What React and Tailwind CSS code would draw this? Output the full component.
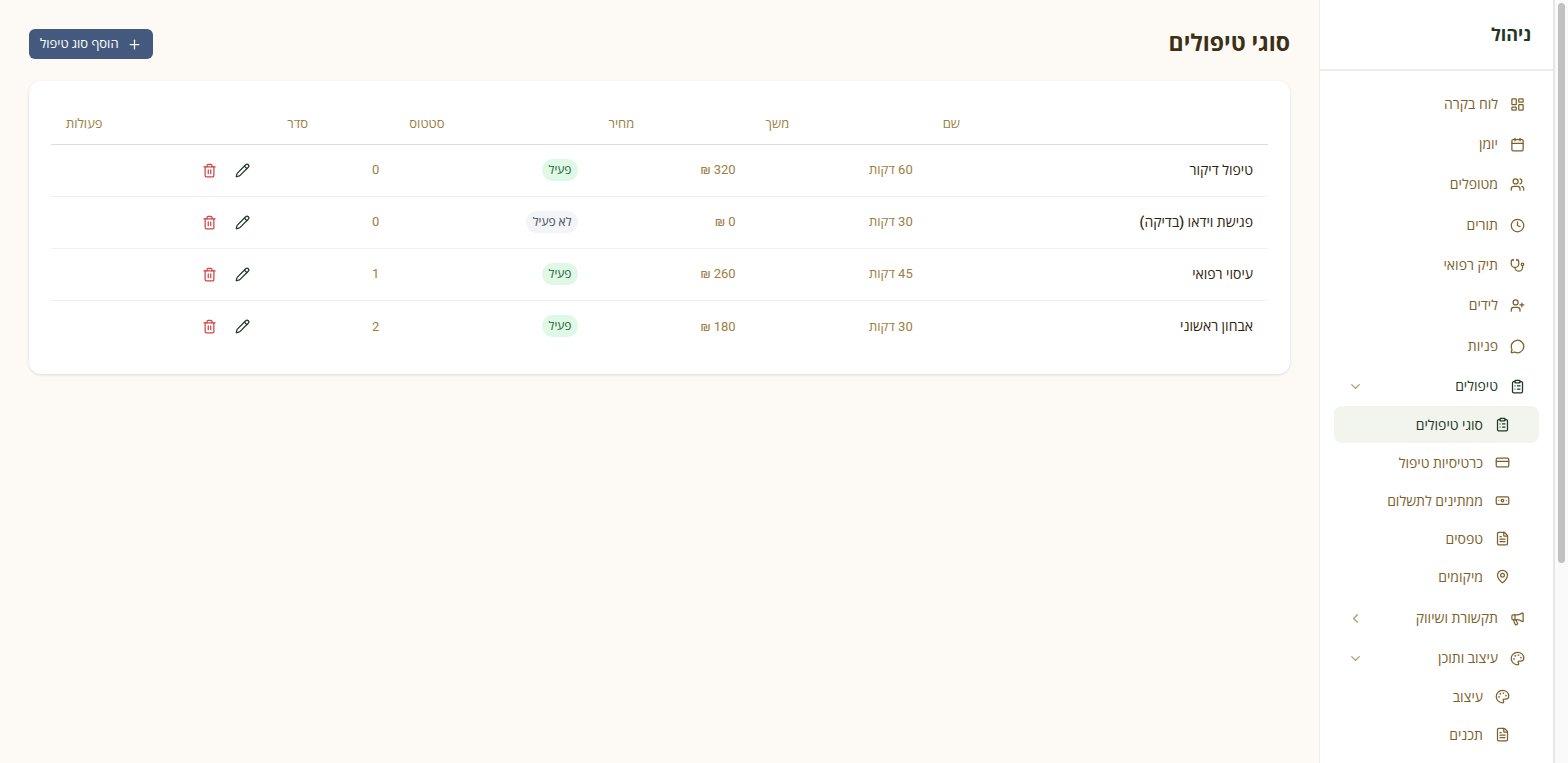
import { useState } from "react"
import {
    Banknote, Calendar, ChevronDown, ChevronLeft, ClipboardList, Clock, CreditCard, FileText,
    LayoutDashboard, MapPin, Megaphone, MessageCircle, Palette, Pencil, Plus, Stethoscope,
    Trash2, UserPlus, Users
} from "lucide-react"

const navGroups = [
    [
        { label: "לוח בקרה", icon: LayoutDashboard },
        { label: "יומן", icon: Calendar },
        { label: "מטופלים", icon: Users },
    ],
    [
        { label: "תורים", icon: Clock },
        { label: "תיק רפואי", icon: Stethoscope },
        { label: "לידים", icon: UserPlus },
    ],
    [
        { label: "פניות", icon: MessageCircle },
        {
            label: "טיפולים", icon: ClipboardList, active: true, items: [
                { label: "סוגי טיפולים", icon: ClipboardList, active: true },
                { label: "כרטיסיות טיפול", icon: CreditCard },
                { label: "ממתינים לתשלום", icon: Banknote },
                { label: "טפסים", icon: FileText },
                { label: "מיקומים", icon: MapPin },
            ]
        },
    ],
    [
        { label: "תקשורת ושיווק", icon: Megaphone, items: [] },
        {
            label: "עיצוב ותוכן", icon: Palette, items: [
                { label: "עיצוב", icon: Palette },
                { label: "תכנים", icon: FileText },
            ]
        },
    ],
]

const treatments = [
    { name: "טיפול דיקור", minutes: 60, price: 320, active: true, order: 0 },
    { name: "פגישת וידאו (בדיקה)", minutes: 30, price: 0, active: false, order: 0 },
    { name: "עיסוי רפואי", minutes: 45, price: 260, active: true, order: 1 },
    { name: "אבחון ראשוני", minutes: 30, price: 180, active: true, order: 2 },
]

const columns = [
    { label: "שם", width: "w-[340px]" },
    { label: "משך", width: "w-[177px]" },
    { label: "מחיר", width: "w-[157px]" },
    { label: "סטטוס", width: "w-[199px]" },
    { label: "סדר", width: "w-[122px]" },
    { label: "פעולות", width: "w-[221px]" },
]

const NavGroup = ({ item }) => {
    const [open, setOpen] = useState(item.items.length > 0)
    const Icon = item.icon
    const Chevron = open ? ChevronDown : ChevronLeft

    return (
        <li>
            <button
                onClick={() => setOpen(!open)}
                aria-expanded={open}
                className={`flex h-9 w-full items-center gap-3 rounded-lg px-[14px] ${item.active ? "text-[#1e3824]" : "text-[#7d5f2c]"}`}>
                <Icon size={15} />
                <span>{item.label}</span>
                <Chevron size={15} className="ms-auto text-[#b09a6c]" />
            </button>
            {open && item.items.length > 0 &&
                <ul className="mt-[2px] flex flex-col gap-px">
                    {item.items.map((sub) => <NavLink key={sub.label} item={sub} nested />)}
                </ul>
            }
        </li>
    )
}

const NavLink = ({ item, nested }) => {
    const Icon = item.icon
    return (
        <li>
            <a
                href="#"
                className={`flex items-center gap-3 rounded-lg ${nested ? "h-[37px] pe-[14px] ps-[29px]" : "h-9 px-[14px]"} ${item.active ? "bg-[#f1f5ee] text-[#1e3824]" : "text-[#7d5f2c]"}`}>
                <Icon size={15} />
                <span>{item.label}</span>
            </a>
        </li>
    )
}

const Sidebar = () => (
    <aside className="flex w-[234px] shrink-0 flex-col border-e border-[#efede8] bg-white">
        <div className="flex h-[71px] shrink-0 items-center border-b-2 border-[#ececea] px-[22px]">
            <h2 className="text-lg font-bold text-[#1e3824]">ניהול</h2>
        </div>
        <nav className="flex flex-col gap-[5px] px-[14px] py-[15px] text-sm">
            {navGroups.map((group, index) =>
                <ul key={index} className="flex flex-col gap-1">
                    {group.map((item) => item.items
                        ? <NavGroup key={item.label} item={item} />
                        : <NavLink key={item.label} item={item} />
                    )}
                </ul>
            )}
        </nav>
    </aside>
)

const StatusBadge = ({ active }) => (
    <span className={`inline-block rounded-full px-[7px] py-[3px] text-xs leading-4 ${active ? "bg-[#e0f9e7] text-[#246038]" : "bg-[#f3f4f7] text-[#434b58]"}`}>
        {active ? "פעיל" : "לא פעיל"}
    </span>
)

export default function App() {
    return (
        <div dir="rtl" className="flex h-screen overflow-hidden bg-[#fdfaf5] font-['Roboto','Open_Sans','Liberation_Sans',sans-serif]">
            <div className="w-[15px] shrink-0 border-e-2 border-[#e6e6e6] bg-[#fafafa] px-[3px] py-[3px]">
                <div className="h-[74%] w-[7px] rounded-full bg-[#c1c1c1]"></div>
            </div>
            <Sidebar />
            <main className="min-w-0 flex-1 p-[29px]">
                <header className="mb-[22px] flex h-[30px] items-center justify-between">
                    <h1 className="text-[23px] font-bold text-[#3d2f14]">סוגי טיפולים</h1>
                    <button className="flex h-[30px] items-center gap-2 rounded-md bg-[#435a7e] px-[11px] text-[13px] font-medium text-white">
                        <Plus size={15} />
                        הוסף סוג טיפול
                    </button>
                </header>

                <section className="rounded-xl bg-white p-[22px] shadow-[0_1px_3px_rgba(0,0,0,0.12)]">
                    <table className="w-full table-fixed text-[13px]">
                        <thead>
                            <tr className="h-[41px] border-b border-[#dcdcdc]">
                                {columns.map((col) =>
                                    <th key={col.label} className={`px-[15px] text-left font-medium text-[#9c7e43] ${col.width}`}>{col.label}</th>
                                )}
                            </tr>
                        </thead>
                        <tbody>
                            {treatments.map((row) =>
                                <tr key={row.name} className="h-[52px] border-b border-[#f0f0f0] text-[#9c7e43] last:border-0">
                                    <td className="px-[15px] text-sm font-medium text-[#2f240f]">{row.name}</td>
                                    <td className="px-[15px]">{row.minutes} דקות</td>
                                    <td className="px-[15px]">{row.price} ₪</td>
                                    <td className="px-[15px]"><StatusBadge active={row.active} /></td>
                                    <td className="px-[15px]">{row.order}</td>
                                    <td className="px-[14px]">
                                        <div className="flex items-center gap-0.5">
                                            <button aria-label="עריכה" className="p-2 text-[#1e3824]"><Pencil size={15} /></button>
                                            <button aria-label="מחיקה" className="p-2 text-[#cf4545]"><Trash2 size={15} /></button>
                                        </div>
                                    </td>
                                </tr>
                            )}
                        </tbody>
                    </table>
                </section>
            </main>
        </div>
    )
}
